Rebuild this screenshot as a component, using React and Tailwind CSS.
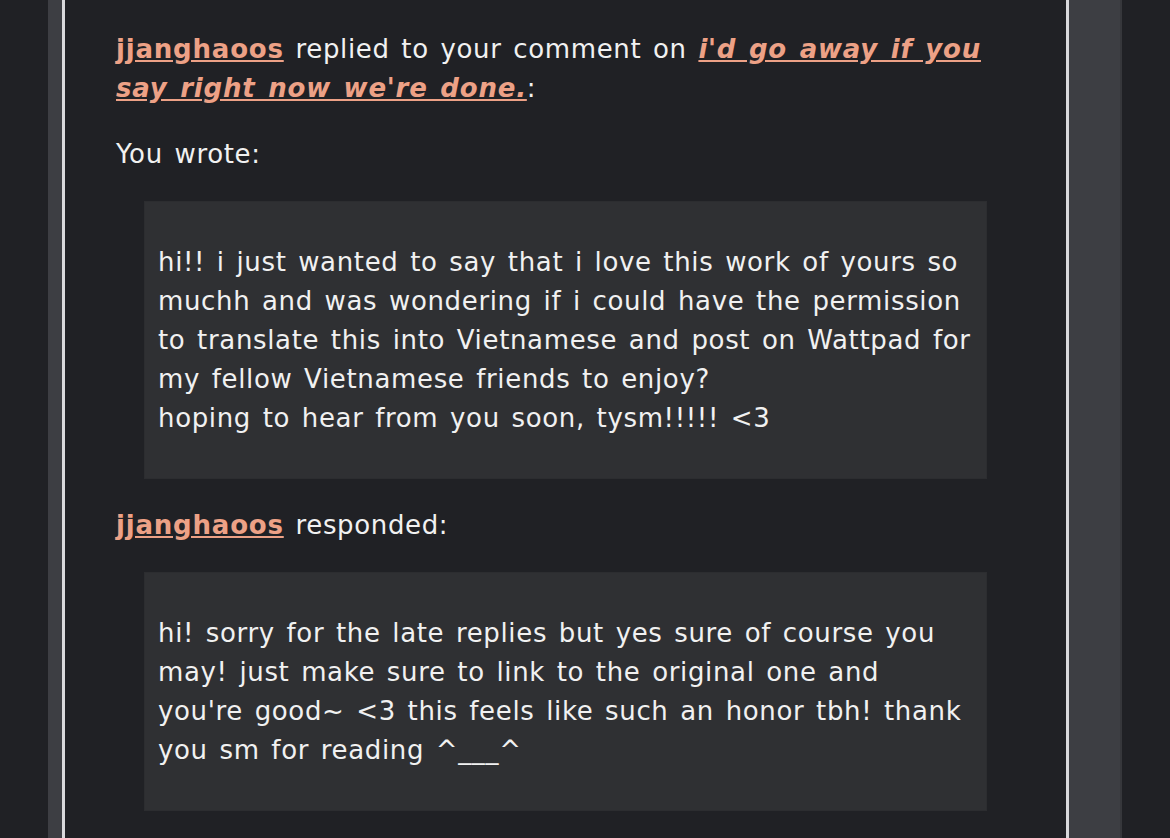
export default function App() {
  const font = { fontFamily: '"DejaVu Sans", Verdana, sans-serif' };
  return (
    <div className="w-[1170px] h-[838px] overflow-hidden bg-[#202125] flex" style={font}>
      <div className="w-[48px] shrink-0" />
      <div className="w-[14px] shrink-0 bg-[#3d3e43]" />
      <div className="w-[1007px] shrink-0 border-x-[3px] border-[#d9d9dc] bg-[#202125] px-[51px] pt-[30px] text-[26px] leading-[39px] tracking-[0.65px] [word-spacing:2.8px] text-[#f1f1f1]">
        <p>
          <a className="font-bold text-[#eda186] underline tracking-[0.8px]">jjanghaoos</a> replied to your comment on{" "}
          <a className="font-bold italic text-[#eda186] underline tracking-[0.8px]">i'd go away if you say right now we're done.</a>:
        </p>
        <p className="mt-[27px]">You wrote:</p>
        <div className="mx-[28px] mt-[27px] bg-[#2f3033] border border-[#2c2d30] px-[13px] pt-[41px] pb-[40px]">
          <p>
            hi!! i just wanted to say that i love this work of yours so muchh and was wondering if i could have the permission to translate this into Vietnamese and post on Wattpad for my fellow Vietnamese friends to enjoy?
            <br />
            hoping to hear from you soon, tysm!!!!! &lt;3
          </p>
        </div>
        <p className="mt-[27px]">
          <a className="font-bold text-[#eda186] underline tracking-[0.8px]">jjanghaoos</a> responded:
        </p>
        <div className="mx-[28px] mt-[27px] bg-[#2f3033] border border-[#2c2d30] px-[13px] pt-[41px] pb-[40px]">
          <p>
            hi! sorry for the late replies but yes sure of course you may! just make sure to link to the original one and you're good~ &lt;3 this feels like such an honor tbh! thank you sm for reading ^___^
          </p>
        </div>
      </div>
      <div className="w-[53px] shrink-0 bg-[#3d3e43] border-r-2 border-[#36373b]" />
      <div className="flex-1" />
    </div>
  );
}
